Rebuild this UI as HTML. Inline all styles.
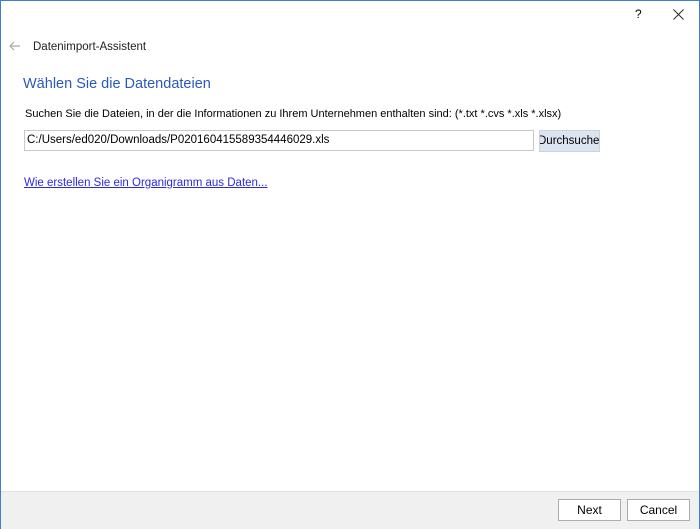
<!DOCTYPE html>
<html><head><style>
body{margin:0;width:700px;height:529px;overflow:hidden;font-family:"Liberation Sans",sans-serif;font-size:12px;color:#000}
.win{position:absolute;left:0;top:0;width:698px;height:527px;border:1px solid #3c7fd0;background:#fff}
.a{position:absolute;white-space:nowrap}
.foot{position:absolute;left:0;top:490px;width:698px;height:37px;background:#f0f0f0;border-top:1px solid #e3e3e3}
.btn{position:absolute;top:7px;width:61px;height:20px;border:1px solid #adadad;background:#fff;text-align:center;line-height:20px}
</style></head><body>
<div class="win">
<div class="a" style="left:634px;top:6px;font-size:12px">?</div>
<svg class="a" style="left:672px;top:8px" width="11" height="11"><path d="M0.5 0.5L10.5 10.5M10.5 0.5L0.5 10.5" stroke="#333" stroke-width="1.1"/></svg>
<svg class="a" style="left:8px;top:40px" width="12" height="10"><path d="M11 5H1M5 1L1 5L5 9" stroke="#aaa" stroke-width="1.2" fill="none"/></svg>
<div class="a" style="left:32px;top:40px;font-size:11.5px;color:#222">Datenimport-Assistent</div>
<div class="a" style="left:22px;top:75px;font-size:14.5px;color:#2a5ab8">Wählen Sie die Datendateien</div>
<div class="a" style="left:24px;top:107px;font-size:11px">Suchen Sie die Dateien, in der die Informationen zu Ihrem Unternehmen enthalten sind: (*.txt *.cvs *.xls *.xlsx)</div>
<div class="a" style="left:23px;top:129px;width:506px;height:19px;border:1px solid #c8c8c8;line-height:19px;padding-left:2px;font-size:11.5px">C:/Users/ed020/Downloads/P020160415589354446029.xls</div>
<div class="a" style="left:538px;top:129px;width:59px;height:20px;background:#dce4ef;border:1px solid #c9d2dd;line-height:20px;font-size:11.5px;overflow:hidden;text-indent:-2px">Durchsuchen</div>
<div class="a" style="left:23px;top:176px;font-size:11.5px;color:#2a2ae0;text-decoration:underline">Wie erstellen Sie ein Organigramm aus Daten...</div>
<div class="foot">
<div class="btn" style="left:557px">Next</div>
<div class="btn" style="left:626px">Cancel</div>
</div>
</div>
</body></html>
